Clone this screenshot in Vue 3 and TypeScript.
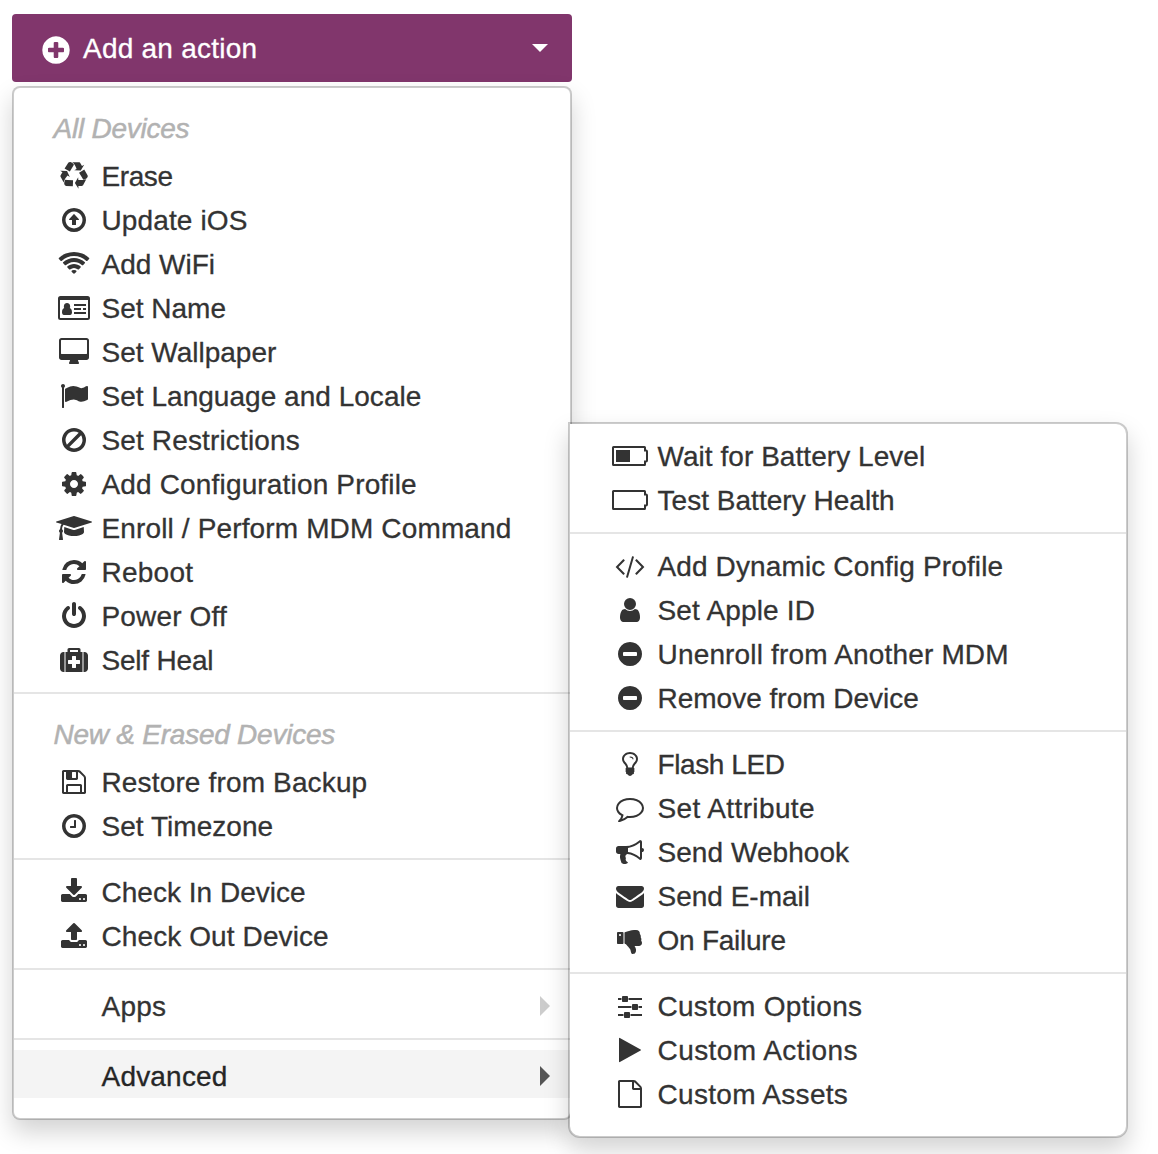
<script setup lang="ts">
interface Icon { w: number; d: string }
interface Item { icon: string; label: string; ls?: number }

const ring = 'M1440 896q0-148-73-273t-198-198-273-73-273 73-198 198-73 273 73 273 198 198 273 73 273-73 198-198 73-273zm224 0q0 209-103 385.5t-279.5 279.5-385.5 103-385.5-103-279.5-279.5-103-385.5 103-385.5 279.5-279.5 385.5-103 385.5 103 279.5 279.5 103 385.5z'
const disc = 'M1664 896q0 209-103 385.5t-279.5 279.5-385.5 103-385.5-103-279.5-279.5-103-385.5 103-385.5 279.5-279.5 385.5-103 385.5 103 279.5 279.5 103 385.5z'
const battery = 'M96 256h1984q96 0 96 96v128q128 0 128 128v576q0 128-128 128v128q0 96-96 96h-1984q-96 0-96-96v-1088q0-96 96-96zM128 384v1024h1920v-224h128v-576h-128v-224z'

const icons: Record<string, Icon> = {
  plus: { w: 1792, d: 'M1344 960v-128q0-26-19-45t-45-19h-256v-256q0-26-19-45t-45-19h-128q-26 0-45 19t-19 45v256h-256q-26 0-45 19t-19 45v128q0 26 19 45t45 19h256v256q0 26 19 45t45 19h128q26 0 45-19t19-45v-256h256q26 0 45-19t19-45z' + disc },
  recycle: { w: 1792, d: 'M836 1169l-15 368-2 22-420-29q-36-3-67-31.5t-47-65.5q-11-27-14.5-55t4-65 12-55 21.5-64 19-53q78 12 509 28zm-387-586l180 379-147-92q-63 72-111.5 144.5t-72.5 125-39.5 94.5-18.5 63l-4 21-190-357q-17-26-18-56t6-47l8-18q35-63 114-188l-140-86zm1231 517l-188 359q-12 29-36.5 46.5t-43.5 20.5l-18 4q-71 7-219 12l8 164-230-367 211-362 7 173q170 16 283 5t170-33zm-785-924q-47 63-265 435l-317-187-19-12 225-356q20-31 60-45t80-10q24 2 48.5 12t42 21 41.5 33 36 34.5 36 39.5 32 35zm655 307l212 363q18 37 12.5 76t-27.5 74q-13 20-33 37t-38 28-48.5 22-47 16-51.5 14-46 12q-34-72-265-436l313-195zm-143-226l142-83-220 373-419-20 151-86q-34-89-75-166t-75.5-123.5-64.5-80-47-46.5l-17-13 405 1q31-3 58 10.5t39 28.5l11 15q39 61 112 190z' },
  up: { w: 1792, d: ring + 'M918 521l281 311q24 26 12 46-9 18-27 18h-160v288q0 32-32 32h-192q-32 0-32-32v-288h-160q-18 0-27-18-12-20 12-46l281-311q22-18 44 0z' },
  wifi: { w: 2048, d: 'M1024 1523q-20 0-93-73.5t-73-93.5q0-32 62.5-54t103.5-22 103.5 22 62.5 54q0 20-73 93.5t-93 73.5zm270-271q-2 0-40-25t-101.5-50-128.5-25-128.5 25-101 50-40.5 25q-18 0-93.5-75t-75.5-93q0-13 10-23 78-77 196-121t233-44 233 44 196 121q10 10 10 23 0 18-75.5 93t-93.5 75zm273-272q-11 0-23-8-136-105-252-154.5t-268-49.5q-85 0-170.5 22t-149 53-113.5 62-79 53-31 22q-17 0-92-75t-75-93q0-12 10-22 132-132 320-205t380-73 380 73 320 205q10 10 10 22 0 18-75 93t-92 75zm271-271q-11 0-22-9-179-157-371.5-236.5t-420.5-79.5-420.5 79.5-371.5 236.5q-11 9-22 9-17 0-92.5-75t-75.5-93q0-13 10-23 187-186 445-288t527-102 527 102 445 288q10 10 10 23 0 18-75.5 93t-92.5 75z' },
  card: { w: 2048, d: 'M160 128h1728q160 0 160 160v1216q0 160-160 160h-1728q-160 0-160-160v-1216q0-160 160-160zM128 384v1120q0 32 32 32h1728q32 0 32-32v-1120zM400 900C330 920 256 1000 256 1190Q256 1344 366 1344H786Q896 1344 896 1190C896 1000 822 920 752 900Q790 840 776 760Q740 576 576 576Q412 576 376 760Q362 840 400 900zM1024 640h768v128h-768zM1024 896h448v128h-448zM1600 896h192v128h-192zM1024 1152h768v128h-768z' },
  desktop: { w: 1920, d: 'M1792 992v-832q0-13-9.5-22.5t-22.5-9.5h-1600q-13 0-22.5 9.5t-9.5 22.5v832q0 13 9.5 22.5t22.5 9.5h1600q13 0 22.5-9.5t9.5-22.5zm128-832v1088q0 66-47 113t-113 47h-544q0 37 16 77.5t32 71 16 43.5q0 26-19 45t-45 19h-512q-26 0-45-19t-19-45q0-14 16-44t32-70 16-78h-544q-66 0-113-47t-47-113v-1088q0-66 47-113t113-47h1600q66 0 113 47t47 113z' },
  flag: { w: 1792, d: 'M320 256q0 72-64 110v1266q0 13-9.5 22.5t-22.5 9.5h-64q-13 0-22.5-9.5t-9.5-22.5v-1266q-64-38-64-110 0-53 37.5-90.5t90.5-37.5 90.5 37.5 37.5 90.5zm1472 64v763q0 25-12.5 38.5t-39.5 27.5q-215 116-369 116-61 0-123.5-22t-108.5-48-115.5-48-142.5-22q-192 0-464 146-17 9-33 9-26 0-45-19t-19-45v-742q0-32 31-55 21-14 79-43 236-120 421-120 107 0 200 29t219 88q38 19 88 19 54 0 117.5-21t110-47 88-47 54.5-21q26 0 45 19t19 45z' },
  ban: { w: 1792, d: 'M1440 893q0-161-87-295l-754 753q137 89 297 89 111 0 211.5-43.5t173.5-116.5 116-174.5 43-212.5zm-999 299l755-754q-135-91-300-91-148 0-273 73t-198 199-73 274q0 162 89 299zm1223-299q0 157-61 300t-163.5 246-245 164-298.5 61-298.5-61-245-164-163.5-246-61-300 61-299.5 163.5-245.5 245-164 298.5-61 298.5 61 245 164 163.5 245.5 61 299.5z' },
  cog: { w: 1792, d: 'M1152 896q0-106-75-181t-181-75-181 75-75 181 75 181 181 75 181-75 75-181zm512-109v222q0 12-8 23t-20 13l-185 28q-19 54-39 91 35 50 107 138 10 12 10 25t-9 23q-27 37-99 108t-94 71q-12 0-26-9l-138-108q-44 23-91 38-16 136-29 186-7 28-36 28h-222q-14 0-24.5-8.5t-11.5-21.5l-28-184q-49-16-90-37l-141 107q-10 9-25 9-14 0-25-11-126-114-165-168-7-10-7-23 0-12 8-23 15-21 51-66.5t54-70.5q-27-50-41-99l-183-27q-13-2-21-12.5t-8-23.5v-222q0-12 8-23t19-13l186-28q14-46 39-92-40-57-107-138-10-12-10-24 0-10 9-23 26-36 98.5-107.5t94.5-71.5q13 0 26 10l138 107q44-23 91-38 16-136 29-186 7-28 36-28h222q14 0 24.5 8.5t11.5 21.5l28 184q49 16 90 37l142-107q9-9 24-9 13 0 25 10 129 119 165 170 7 8 7 22 0 12-8 23-15 21-51 66.5t-54 70.5q26 50 41 98l183 28q13 2 21 12.5t8 23.5z' },
  cap: { w: 2304, d: 'M1774 836l18 316q4 69-82 128t-235 93.5-323 34.5-323-34.5-235-93.5-82-128l18-316 574 181q22 7 48 7t48-7zm530-324q0 23-22 31l-1120 352q-4 1-10 1t-10-1l-652-206q-43 34-71 111.5t-34 178.5q63 36 63 109 0 69-58 107l58 433q2 14-8 25-9 11-24 11h-192q-15 0-24-11-10-11-8-25l58-433q-58-38-58-107 0-73 65-111 11-207 98-330l-333-104q-22-8-22-31t22-31l1120-352q4-1 10-1t10 1l1120 352q22 8 22 31z' },
  refresh: { w: 1792, d: 'M1639 1056q0 5-1 7-64 268-268 434.5t-478 166.5q-146 0-282.5-55t-243.5-157l-129 129q-19 19-45 19t-45-19-19-45v-448q0-26 19-45t45-19h448q26 0 45 19t19 45-19 45l-137 137q71 66 161 102t187 36q134 0 250-65t186-179q11-17 53-117 8-23 30-23h192q13 0 22.5 9.5t9.5 22.5zm25-800v448q0 26-19 45t-45 19h-448q-26 0-45-19t-19-45 19-45l138-138q-148-137-349-137-134 0-250 65t-186 179q-11 17-53 117-8 23-30 23h-199q-13 0-22.5-9.5t-9.5-22.5v-7q65-268 270-434.5t480-166.5q146 0 284 55.5t245 156.5l130-129q19-19 45-19t45 19 19 45z' },
  power: { w: 1792, d: 'M1664 896q0 156-61 298t-164 245-245 164-298 61-298-61-245-164-164-245-61-298q0-182 80.5-343t226.5-270q43-32 95.5-25t83.5 50q32 42 24.5 94.5t-49.5 84.5q-98 74-151.5 181t-53.5 228q0 104 40.5 198.5t109.5 163.5 163.5 109.5 198.5 40.5 198.5-40.5 163.5-109.5 109.5-163.5 40.5-198.5q0-121-53.5-228t-151.5-181q-42-32-49.5-84.5t24.5-94.5q31-43 84-50t95 25q146 109 226.5 270t80.5 343zm-640-768v640q0 52-38 90t-90 38-90-38-38-90v-640q0-52 38-90t90-38 90 38 38 90z' },
  medkit: { w: 1792, d: 'M1280 1120v-192q0-14-9-23t-23-9h-224v-224q0-14-9-23t-23-9h-192q-14 0-23 9t-9 23v224h-224q-14 0-23 9t-9 23v192q0 14 9 23t23 9h224v224q0 14 9 23t23 9h192q14 0 23-9t9-23v-224h224q14 0 23-9t9-23zm-640-736h512v-128h-512v128zM288 384v1280h-64q-92 0-158-66t-66-158v-832q0-92 66-158t158-66h64zM1440 384v1280h-1088v-1280h128v-160q0-40 28-68t68-28h640q40 0 68 28t28 68v160h128zm352 224v832q0 92-66 158t-158 66h-64v-1280h64q92 0 158 66t66 158z' },
  floppy: { w: 1792, d: 'M512 1536h768v-384h-768v384zm896 0h128v-896q0-14-10-38.5t-20-34.5l-281-281q-10-10-34-20t-39-10v416q0 40-28 68t-68 28h-576q-40 0-68-28t-28-68v-416h-128v1280h128v-416q0-40 28-68t68-28h832q40 0 68 28t28 68v416zm-384-928v-320q0-13-9.5-22.5t-22.5-9.5h-192q-13 0-22.5 9.5t-9.5 22.5v320q0 13 9.5 22.5t22.5 9.5h192q13 0 22.5-9.5t9.5-22.5zm640 32v928q0 40-28 68t-68 28h-1344q-40 0-68-28t-28-68v-1344q0-40 28-68t68-28h928q40 0 88 20t76 48l280 280q28 28 48 76t20 88z' },
  clock: { w: 1792, d: 'M1024 544v448q0 14-9 23t-23 9h-320q-14 0-23-9t-9-23v-64q0-14 9-23t23-9h224v-352q0-14 9-23t23-9h64q14 0 23 9t9 23z' + ring },
  download: { w: 1792, d: 'M1344 1344q0-26-19-45t-45-19-45 19-19 45 19 45 45 19 45-19 19-45zm256 0q0-26-19-45t-45-19-45 19-19 45 19 45 45 19 45-19 19-45zm128-224v320q0 40-28 68t-68 28h-1472q-40 0-68-28t-28-68v-320q0-40 28-68t68-28h465l135 136q58 56 136 56t136-56l136-136h464q40 0 68 28t28 68zm-325-569q17 41-14 70l-448 448q-18 19-45 19t-45-19l-448-448q-31-29-14-70 17-39 59-39h256v-448q0-26 19-45t45-19h256q26 0 45 19t19 45v448h256q42 0 59 39z' },
  upload: { w: 1792, d: 'M1344 1472q0-26-19-45t-45-19-45 19-19 45 19 45 45 19 45-19 19-45zm256 0q0-26-19-45t-45-19-45 19-19 45 19 45 45 19 45-19 19-45zm128-224v320q0 40-28 68t-68 28h-1472q-40 0-68-28t-28-68v-320q0-40 28-68t68-28h427q21 56 70.5 92t110.5 36h256q61 0 110.5-36t70.5-92h427q40 0 68 28t28 68zm-325-648q-17 40-59 40h-256v448q0 26-19 45t-45 19h-256q-26 0-45-19t-19-45v-448h-256q-42 0-59-40-17-39 14-69l448-448q18-19 45-19t45 19l448 448q31 30 14 69z' },
  batteryHalf: { w: 2304, d: battery + 'M256 512h896v768h-896z' },
  batteryEmpty: { w: 2304, d: battery },
  code: { w: 1920, d: 'M617 1399l-50 50q-10 10-23 10t-23-10l-466-466q-10-10-10-23t10-23l466-466q10-10 23-10t23 10l50 50q10 10 10 23t-10 23l-393 393 393 393q10 10 10 23t-10 23zm591-1067l-373 1291q-4 13-15.5 19.5t-23.5 2.5l-62-17q-13-4-19.5-15.5t-2.5-24.5l373-1291q4-13 15.5-19.5t23.5-2.5l62 17q13 4 19.5 15.5t2.5 24.5zm657 651l-466 466q-10 10-23 10t-23-10l-50-50q-10-10-10-23t10-23l393-393-393-393q-10-10-10-23t10-23l50-50q10-10 23-10t23 10l466 466q10 10 10 23t-10 23z' },
  user: { w: 1792, d: 'M1536 1399q0 109-62.5 187t-150.5 78h-854q-88 0-150.5-78t-62.5-187q0-85 8.5-160.5t31.5-152 58.5-131 94-89 134.5-34.5q131 128 313 128t313-128q76 0 134.5 34.5t94 89 58.5 131 31.5 152 8.5 160.5zm-256-887q0 159-112.5 271.5t-271.5 112.5-271.5-112.5-112.5-271.5 112.5-271.5 271.5-112.5 271.5 112.5 112.5 271.5z' },
  minus: { w: 1792, d: 'M1344 960v-128q0-26-19-45t-45-19h-768q-26 0-45 19t-19 45v128q0 26 19 45t45 19h768q26 0 45-19t19-45z' + disc },
  bulb: { w: 1792, d: 'M1120 576q0 13-9.5 22.5t-22.5 9.5-22.5-9.5-9.5-22.5q0-46-54-71t-106-25q-13 0-22.5-9.5t-9.5-22.5 9.5-22.5 22.5-9.5q50 0 99.5 16t87 54 37.5 90zm160 0q0-72-34.5-134t-90-101.5-123-62-136.5-22.5-136.5 22.5-123 62-90 101.5-34.5 134q0 101 68 180 10 11 30.5 33t30.5 33q128 153 141 298h228q13-145 141-298 10-11 30.5-33t30.5-33q68-79 68-180zm128 0q0 155-103 268-45 49-74.5 87t-59.5 95.5-34 107.5q47 28 47 82 0 37-25 64 25 27 25 64 0 52-45 81 13 23 13 47 0 46-31.5 71t-77.5 25q-20 44-60 70t-87 26-87-26-60-70q-46 0-77.5-25t-31.5-71q0-24 13-47-45-29-45-81 0-37 25-64-25-27-25-64 0-54 47-82-4-50-34-107.5t-59.5-95.5-74.5-87q-103-113-103-268 0-99 44.5-184.5t117-142 164-89 186.5-32.5 186.5 32.5 164 89 117 142 44.5 184.5z' },
  comment: { w: 1792, d: 'M896 384q-204 0-381.5 69.5t-282 187.5-104.5 255q0 112 71.5 213.5t201.5 175.5l87 50-27 96q-24 91-70 172 152-63 275-171l43-38 57 6q69 8 130 8 204 0 381.5-69.5t282-187.5 104.5-255-104.5-255-282-187.5-381.5-69.5zm896 512q0 174-120 321.5t-326 233-450 85.5q-70 0-145-8-198 175-460 242-49 14-114 22h-5q-15 0-27-10.5t-16-27.5v-1q-3-4-.5-12t2-10 4.5-9.5l6-9 7-8.5 8-9q7-8 31-34.5t34.5-38 31-39.5 32.5-51 27-59 26-76q-157-89-247.5-220t-90.5-281q0-174 120-321.5t326-233 450-85.5 450 85.5 326 233 120 321.5z' },
  bullhorn: { w: 1792, d: 'M1664 640q53 0 90.5 37.5t37.5 90.5-37.5 90.5-90.5 37.5v384q0 52-38 90t-90 38q-417-347-812-380-58 19-91 66t-31 100.5 40 92.5q-20 33-23 65.5t6 58 33.5 55 48 50 61.5 50.5q-29 58-111.5 83t-168.5 11.5-132-55.5q-7-23-29.5-87.5t-32-94.5-23-89-15-101 3.5-98.5 22-110.5h-122q-66 0-113-47t-47-113v-192q0-66 47-113t113-47h480q435 0 896-384 52 0 90 38t38 90v384zm-128 604v-954q-394 302-768 343v270q377 42 768 341z' },
  envelope: { w: 1792, d: 'M1792 710v794q0 66-47 113t-113 47h-1472q-66 0-113-47t-47-113v-794q44 49 101 87 362 246 497 345 57 42 92.5 65.5t94.5 48 110 24.5h2q51 0 110-24.5t94.5-48 92.5-65.5q170-123 498-345 57-39 100-87zm0-294q0 79-49 151t-122 123q-376 261-468 325-10 7-42.5 31t-54 38.5-52 32.5-57.5 27-50 9h-2q-23 0-50-9t-57.5-27-52-32.5-54-38.5-42.5-31q-91-64-262-182.5t-205-142.5q-62-42-117-115.5t-55-136.5q0-78 41.5-130t118.5-52h1472q65 0 112.5 47t47.5 113z' },
  thumb: { w: 1792, d: 'M320 1344q0-26-19-45t-45-19q-27 0-45.5 19t-18.5 45q0 27 18.5 45.5t45.5 18.5q26 0 45-18.5t19-45.5zm160-512v640q0 26-19 45t-45 19h-288q-26 0-45-19t-19-45v-640q0-26 19-45t45-19h288q26 0 45 19t19 45zm1184 0q0 86-55 149 15 44 15 76 3 76-43 137 17 56 0 117-15 57-54 94 9 112-49 181-64 76-197 78h-129q-66 0-144-15.5t-121.5-29-120.5-39.5q-123-43-158-44-26-1-45-19.5t-19-44.5v-641q0-25 18-43.5t43-20.5q24-2 76-59t101-121q68-87 101-120 18-18 31-48t17.5-48.5 13.5-60.5q7-39 12.5-61t19.5-52 34-50q19-19 45-19 46 0 82.5 10.5t60 26 40 40.5 24 45 12 50 5 45 .5 39q0 38-9.5 76t-19 60-27.5 56q-3 6-10 18t-11 22-8 24h277q78 0 135 57t57 135z' },
  sliders: { w: 1792, d: 'M480 1408v128h-352v-128h352zm352-128q26 0 45 19t19 45v256q0 26-19 45t-45 19h-256q-26 0-45-19t-19-45v-256q0-26 19-45t45-19h256zm160-384v128h-864v-128h864zm-640-512v128h-224v-128h224zm1312 1024v128h-736v-128h736zm-960-1152q26 0 45 19t19 45v256q0 26-19 45t-45 19h-256q-26 0-45-19t-19-45v-256q0-26 19-45t45-19h256zm640 512q26 0 45 19t19 45v256q0 26-19 45t-45 19h-256q-26 0-45-19t-19-45v-256q0-26 19-45t45-19h256zm320 128v128h-224v-128h224zm0-512v128h-864v-128h864z' },
  play: { w: 1792, d: 'M1576 927l-1328 738q-23 13-39.5 3t-16.5-36v-1472q0-26 16.5-36t39.5 3l1328 738q23 13 23 31t-23 31z' },
  file: { w: 1792, d: 'M1596 380q28 28 48 76t20 88v1152q0 40-28 68t-68 28h-1344q-40 0-68-28t-28-68v-1600q0-40 28-68t68-28h896q40 0 88 20t76 48zm-444-244v376h376q-10-29-22-41l-313-313q-12-12-41-22zm384 1528v-1024h-416q-40 0-68-28t-28-68v-416h-768v1536h1280z' },
}

const mainGroups: { title?: string; items: Item[] }[] = [
  { title: 'All Devices', items: [
    { icon: 'recycle', label: 'Erase', ls: -0.4 },
    { icon: 'up', label: 'Update iOS', ls: 0.12 },
    { icon: 'wifi', label: 'Add WiFi' },
    { icon: 'card', label: 'Set Name' },
    { icon: 'desktop', label: 'Set Wallpaper' },
    { icon: 'flag', label: 'Set Language and Locale', ls: 0.03 },
    { icon: 'ban', label: 'Set Restrictions', ls: 0.14 },
    { icon: 'cog', label: 'Add Configuration Profile', ls: 0.16 },
    { icon: 'cap', label: 'Enroll / Perform MDM Command', ls: 0.14 },
    { icon: 'refresh', label: 'Reboot', ls: 0.25 },
    { icon: 'power', label: 'Power Off', ls: 0.15 },
    { icon: 'medkit', label: 'Self Heal', ls: -0.2 },
  ] },
  { title: 'New & Erased Devices', items: [
    { icon: 'floppy', label: 'Restore from Backup', ls: 0.15 },
    { icon: 'clock', label: 'Set Timezone', ls: 0.04 },
  ] },
  { items: [
    { icon: 'download', label: 'Check In Device', ls: 0.02 },
    { icon: 'upload', label: 'Check Out Device', ls: 0.1 },
  ] },
]

const subGroups: Item[][] = [
  [
    { icon: 'batteryHalf', label: 'Wait for Battery Level', ls: 0.05 },
    { icon: 'batteryEmpty', label: 'Test Battery Health', ls: 0.03 },
  ],
  [
    { icon: 'code', label: 'Add Dynamic Config Profile', ls: 0.13 },
    { icon: 'user', label: 'Set Apple ID', ls: 0.16 },
    { icon: 'minus', label: 'Unenroll from Another MDM', ls: 0.17 },
    { icon: 'minus', label: 'Remove from Device' },
  ],
  [
    { icon: 'bulb', label: 'Flash LED', ls: -0.42 },
    { icon: 'comment', label: 'Set Attribute', ls: 0.38 },
    { icon: 'bullhorn', label: 'Send Webhook', ls: 0.06 },
    { icon: 'envelope', label: 'Send E-mail' },
    { icon: 'thumb', label: 'On Failure', ls: -0.25 },
  ],
  [
    { icon: 'sliders', label: 'Custom Options', ls: 0.29 },
    { icon: 'play', label: 'Custom Actions', ls: 0.43 },
    { icon: 'file', label: 'Custom Assets', ls: 0.3 },
  ],
]
</script>

<template>
  <main class="page">
    <button class="toggle" type="button">
      <svg class="toggle-icon" viewBox="0 0 1792 1792"><path :d="icons.plus.d" fill-rule="evenodd" /></svg>
      <span class="toggle-label">Add an action</span>
      <i class="caret"></i>
    </button>
    <div class="menu">
      <template v-for="(g, gi) in mainGroups" :key="gi">
        <hr v-if="gi" />
        <h6 v-if="g.title">{{ g.title }}</h6>
        <a v-for="it in g.items" :key="it.label" class="item">
          <span class="icon">
            <svg :viewBox="`0 0 ${icons[it.icon].w} 1792`" :width="icons[it.icon].w / 64" height="28"><path :d="icons[it.icon].d" fill-rule="evenodd" /></svg>
          </span>
          <span class="label" :style="{ letterSpacing: (it.ls ?? 0) + 'px' }">{{ it.label }}</span>
        </a>
      </template>
      <hr />
      <a class="item parent"><span class="icon"></span><span class="label wide">Apps</span><i class="arrow"></i></a>
      <hr />
      <a class="item parent active"><span class="icon"></span><span class="label wide">Advanced</span><i class="arrow"></i></a>
    </div>
    <div class="menu submenu">
      <template v-for="(g, gi) in subGroups" :key="gi">
        <hr v-if="gi" />
        <a v-for="it in g" :key="it.label" class="item">
          <span class="icon">
            <svg :class="{ flip: it.icon === 'thumb' }" :viewBox="`0 0 ${icons[it.icon].w} 1792`" :width="icons[it.icon].w / 64" height="28"><path :d="icons[it.icon].d" fill-rule="evenodd" /></svg>
          </span>
          <span class="label" :style="{ letterSpacing: (it.ls ?? 0) + 'px' }">{{ it.label }}</span>
        </a>
      </template>
    </div>
  </main>
</template>

<style>
body { margin: 0; background: #fff; }
</style>

<style scoped>
.page {
  position: relative;
  box-sizing: border-box;
  height: 1154px;
  padding: 14px 12px 0;
  overflow: hidden;
  font: 28px/44px "Liberation Sans", Arial, sans-serif;
  color: #333;
  -webkit-text-stroke: .3px currentColor;
}
.toggle {
  display: flex;
  align-items: center;
  box-sizing: border-box;
  width: 560px;
  height: 68px;
  margin: 0 0 4px;
  padding: 0 24px 0 28px;
  border: 0;
  border-radius: 4px;
  background: #81366c;
  color: #fff;
  font: inherit;
}
.toggle-icon { width: 32px; height: 32px; margin: 4px 11px 0 0; fill: #fff; }
.toggle-label { padding-top: 2px; letter-spacing: .23px; -webkit-text-stroke: .3px #fff; }
.caret { margin-left: auto; border: 8px solid transparent; border-top-color: #fff; border-bottom: 0; }
.menu {
  box-sizing: border-box;
  width: 560px;
  padding: 10px 0 20px;
  border: 2px solid rgba(0, 0, 0, .2);
  border-radius: 8px;
  background: #fff;
  background-clip: padding-box;
  box-shadow: 0 12px 24px rgba(0, 0, 0, .175);
}
.submenu { position: absolute; left: 568px; top: 422px; border-radius: 0 12px 12px 12px; }
hr { height: 2px; margin: 10px 0; border: 0; background: #e5e5e5; }
h6 {
  margin: 0;
  padding: 9px 40px 3px 39.5px;
  font: inherit;
  font-style: italic;
  letter-spacing: -.24px;
  color: #b2b2b2;
  -webkit-text-stroke: .5px #b2b2b2;
}
.item { display: flex; align-items: center; height: 44px; padding-left: 40px; white-space: nowrap; }
.icon { display: flex; flex: none; justify-content: center; width: 40px; margin-right: 7.5px; }
.icon svg { flex: none; fill: #333; }
.label { padding-top: 2px; }
.wide { letter-spacing: .2px; }
.flip { transform: translateY(2px) scaleY(-1); }
.parent { padding-top: 4px; }
.active { background: #f4f4f4; color: #262626; -webkit-text-stroke-color: #262626; }
.arrow { margin: 0 20px 0 auto; border: 10px solid transparent; border-left-color: #ccc; border-right: 0; }
.active .arrow { border-left-color: #555; }
</style>
